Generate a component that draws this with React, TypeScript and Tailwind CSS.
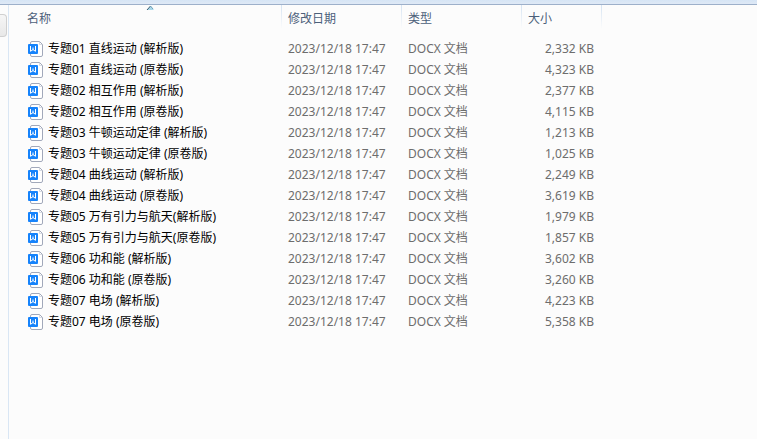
type FileEntry = {
    name: string;
    size: string;
};

const MODIFIED = "2023/12/18 17:47";
const FILE_TYPE = "DOCX 文档";

const files: FileEntry[] = [
    { name: "专题01 直线运动 (解析版)", size: "2,332 KB" },
    { name: "专题01 直线运动 (原卷版)", size: "4,323 KB" },
    { name: "专题02 相互作用 (解析版)", size: "2,377 KB" },
    { name: "专题02 相互作用 (原卷版)", size: "4,115 KB" },
    { name: "专题03 牛顿运动定律 (解析版)", size: "1,213 KB" },
    { name: "专题03 牛顿运动定律 (原卷版)", size: "1,025 KB" },
    { name: "专题04 曲线运动 (解析版)", size: "2,249 KB" },
    { name: "专题04 曲线运动 (原卷版)", size: "3,619 KB" },
    { name: "专题05 万有引力与航天(解析版)", size: "1,979 KB" },
    { name: "专题05 万有引力与航天(原卷版)", size: "1,857 KB" },
    { name: "专题06 功和能 (解析版)", size: "3,602 KB" },
    { name: "专题06 功和能 (原卷版)", size: "3,260 KB" },
    { name: "专题07 电场 (解析版)", size: "4,223 KB" },
    { name: "专题07 电场 (原卷版)", size: "5,358 KB" },
];

function DocIcon() {
    return (
        <svg className="size-4 shrink-0" viewBox="0 0 16 16" fill="none" aria-hidden="true">
            <path
                d="M2.5 3V2Q2.5.5 4 .5H11.5L14.5 3.5V14Q14.5 15.5 13 15.5H4Q2.5 15.5 2.5 14Z"
                fill="#fff"
                stroke="#a1a8ba"
            />
            <path d="M11.5 1V3.5H14" stroke="#d5d9e2" />
            <rect x="0" y="3" width="10" height="10" rx="1" fill="#1683fb" />
            <path d="M2.5 5V10.3L5 8.6L7.5 10.3V5M5 6.5V8.8" stroke="#fff" />
        </svg>
    );
}

function SortArrow() {
    return (
        <svg className="absolute top-px left-1/2 h-1 w-2" viewBox="0 0 8 4" aria-hidden="true">
            <path d="M4.5 0L8 4H1Z" fill="#a9d8ea" />
            <path d="M4.5 0L1 4" stroke="#3c5e72" />
            <path d="M4.5 0L7 3" stroke="#6f9db5" />
        </svg>
    );
}

function ColumnHeader({ label, sorted }: { label: string; sorted?: boolean }) {
    return (
        <th
            scope="col"
            aria-sort={sorted ? "ascending" : undefined}
            className="relative h-[33px] p-0 align-top font-normal"
        >
            <button
                type="button"
                className={
                    sorted
                        ? "flex h-6 w-full items-center pt-1 pl-[18px] text-left"
                        : "flex h-6 w-full items-center pt-1 pl-1.5 text-left"
                }
            >
                {label}
            </button>
            {sorted && <SortArrow />}
            <span className="absolute top-0 right-0 h-6 w-px bg-linear-to-b from-[#d5e3f2] to-[#fcfcfc]" />
        </th>
    );
}

export default function App() {
    return (
        <div className="flex min-h-screen flex-col bg-[#fcfcfc] font-['Noto_Sans','Noto_Sans_CJK_SC',sans-serif] text-xs">
            <div className="h-[5px] border-b border-[#9db0ca] bg-linear-to-b from-[#d6e5f5] to-[#dfe9f6]" />
            <div className="flex flex-1">
                <aside className="w-[9px] shrink-0 border-r border-[#d9e6f4] pt-[9px]">
                    <button
                        type="button"
                        aria-label="导航窗格"
                        className="block h-[23px] w-[7px] rounded-r-sm border border-l-0 border-[#d0d0d0] bg-linear-to-b from-[#f6f6f6] to-[#e8e8e8]"
                    />
                </aside>
                <main className="flex-1">
                    <table className="w-[593px] table-fixed border-collapse">
                        <colgroup>
                            <col className="w-[273px]" />
                            <col className="w-[120px]" />
                            <col className="w-[120px]" />
                            <col className="w-[80px]" />
                        </colgroup>
                        <thead className="text-[#4c607a]">
                            <tr>
                                <ColumnHeader label="名称" sorted />
                                <ColumnHeader label="修改日期" />
                                <ColumnHeader label="类型" />
                                <ColumnHeader label="大小" />
                            </tr>
                        </thead>
                        <tbody className="whitespace-nowrap text-[#6d6d6d]">
                            {files.map((file) => (
                                <tr key={file.name} className="h-[21px]">
                                    <td className="p-0 pl-[19px] text-black">
                                        <div className="flex items-center gap-1">
                                            <DocIcon />
                                            <span>{file.name}</span>
                                        </div>
                                    </td>
                                    <td className="p-0 pl-1.5">{MODIFIED}</td>
                                    <td className="p-0 pl-1.5">{FILE_TYPE}</td>
                                    <td className="p-0 pr-2 text-right">{file.size}</td>
                                </tr>
                            ))}
                        </tbody>
                    </table>
                </main>
            </div>
        </div>
    );
}
